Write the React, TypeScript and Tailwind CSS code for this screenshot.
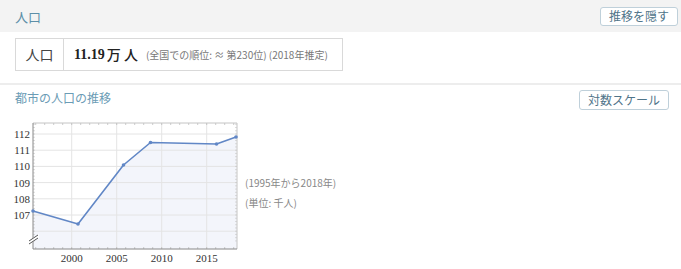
const JP = "font-['Noto_Sans_CJK_JP','Noto_Sans',sans-serif]";

// chart geometry (svg coords)
const L = 23;
const R = 227;
const T = 10;
const B = 136;
const yOf = (v: number) => 21 + (112 - v) * 16.2;
const xOf = (yr: number) => 61.7 + (yr - 2000) * 9;

const points: [number, number][] = [
  [23, 98],
  [68, 111],
  [113.5, 52],
  [140.5, 29.5],
  [206.5, 31],
  [226, 24],
];

function Chart() {
  const line = points.map((p) => p.join(',')).join(' ');
  const area = `${L},${B} ${line} ${R},${B}`;
  const yearTicks: number[] = [];
  for (let y = 1996; y <= 2018; y++) yearTicks.push(xOf(y));
  const valTicks: number[] = [];
  for (let v = 105.4; v <= 112.7; v += 0.2) valTicks.push(yOf(v));

  return (
    <svg width="230" height="152" viewBox="0 0 230 152" className="block">
      <polygon points={area} fill="#f3f5fb" />
      {[112, 111, 110, 109, 108, 107, 106].map((v) => (
        <line key={v} x1={L} x2={R} y1={yOf(v)} y2={yOf(v)} stroke="#e4e4e4" strokeWidth="1" />
      ))}
      {[2000, 2005, 2010, 2015].map((y) => (
        <line key={y} x1={xOf(y)} x2={xOf(y)} y1={T} y2={B} stroke="#e4e4e4" strokeWidth="1" />
      ))}
      {yearTicks.map((x, i) => (
        <g key={i} stroke="#b5b5b5" strokeWidth="0.7">
          <line x1={x} x2={x} y1={T} y2={T + 2} />
          <line x1={x} x2={x} y1={B} y2={B - 2} />
        </g>
      ))}
      {valTicks.map((y, i) =>
        y > T && y < B ? (
          <g key={i} stroke="#c4c4c4" strokeWidth="0.6">
            <line x1={L} x2={L + 2} y1={y} y2={y} />
            <line x1={R} x2={R - 2} y1={y} y2={y} />
          </g>
        ) : null,
      )}
      <line x1={L} x2={R} y1={T} y2={T} stroke="#c4c4c4" strokeWidth="1" />
      <line x1={R} x2={R} y1={T} y2={B} stroke="#c4c4c4" strokeWidth="1" />
      <line x1={L} x2={R} y1={B} y2={B} stroke="#888" strokeWidth="1" />
      <line x1={L} x2={L} y1={T} y2={B} stroke="#888" strokeWidth="1" />
      <polygon points="18,128 29,121 29,125 18,132" fill="#fff" />
      <line x1="19" y1="128" x2="28" y2="122" stroke="#555" strokeWidth="1" />
      <line x1="19" y1="131" x2="28" y2="125" stroke="#555" strokeWidth="1" />
      <polyline points={line} fill="none" stroke="#6187c6" strokeWidth="1.6" strokeLinejoin="round" />
      {points.map(([x, y], i) => (
        <circle key={i} cx={x} cy={y} r="1.8" fill="#6187c6" />
      ))}
      <g fontFamily="'Liberation Serif', serif" fontSize="11" fill="#333">
        {[112, 111, 110, 109, 108, 107].map((v) => (
          <text key={v} x="20" y={yOf(v) + 4} textAnchor="end">
            {v}
          </text>
        ))}
        {[2000, 2005, 2010, 2015].map((y) => (
          <text key={y} x={xOf(y)} y="149" textAnchor="middle">
            {y}
          </text>
        ))}
      </g>
    </svg>
  );
}

export default function App() {
  return (
    <div className={`w-[681px] h-[269px] bg-white overflow-hidden ${JP}`}>
      <div className="h-8 bg-[#f3f3f3] flex items-center justify-between pl-[15px] pr-[3px]">
        <span className="text-[13px] text-[#5d8fa8] leading-none">人口</span>
        <button className="h-[19px] px-[8px] bg-white border border-[#bfd0da] rounded-[3px] text-[12px] leading-none text-[#4f7489]">
          推移を隠す
        </button>
      </div>

      <div className="pl-[15px] pt-[6px]">
        <div className="w-[328px] h-[33px] border border-[#d9d9d9] flex items-stretch">
          <div className="w-[48px] border-r border-[#d9d9d9] flex items-center justify-center text-[14px] text-[#444]">
            人口
          </div>
          <div className="flex items-center pl-[10px] text-[#222]">
            <span className="font-['Liberation_Serif',serif] font-bold text-[14px]">11.19</span>
            <span className="ml-[2px] font-medium text-[14px]">万 人</span>
            <span className="ml-[8px] text-[10px] text-[#777]">(全国での順位: ≈ 第230位) (2018年推定)</span>
          </div>
        </div>
      </div>

      <div className="mt-[12px] h-[2px] bg-[#ededed]" />

      <div className="h-[25px] flex items-start justify-between pl-[15px] pr-[12px] pt-[4px]">
        <span className="text-[12px] leading-[17px] text-[#6b9cb5]">都市の人口の推移</span>
        <button className="mt-[1px] h-[20px] px-[8px] bg-white border border-[#bfd0da] rounded-[3px] text-[12px] leading-none text-[#4f7489]">
          対数スケール
        </button>
      </div>

      <div className="mt-[3px] flex items-start pl-[10px]">
        <Chart />
        <div className="ml-[5px] mt-[60px] text-[10px] leading-[20px] text-[#888]">
          <div>(1995年から2018年)</div>
          <div>(単位: 千人)</div>
        </div>
      </div>
    </div>
  );
}
